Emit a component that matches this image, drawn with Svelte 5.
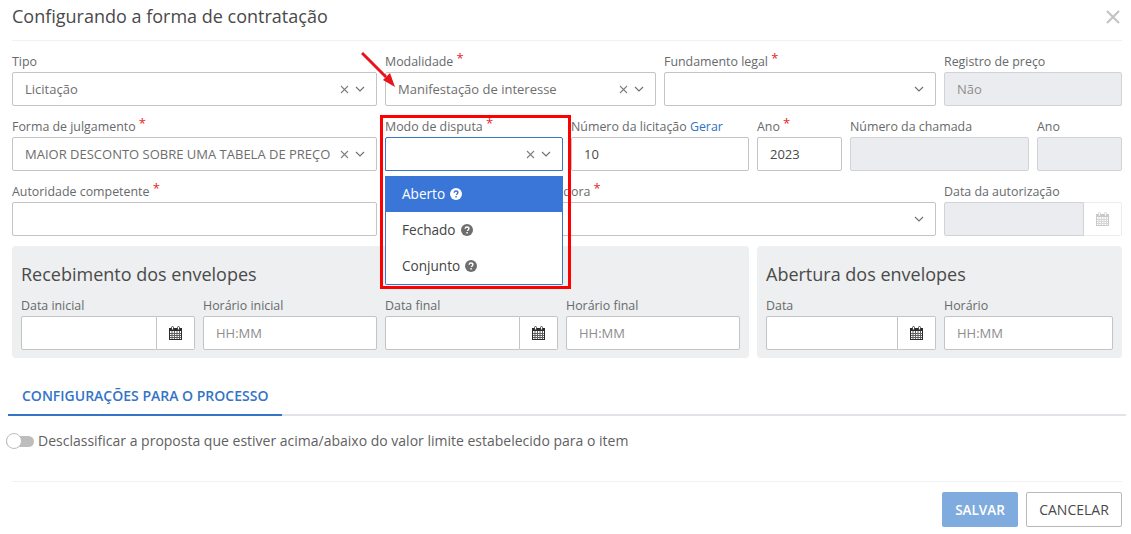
{#snippet chev()}
  <svg class="chev" width="10" height="6" viewBox="0 0 10 6"><path d="M1 1l4 4 4-4" fill="none" stroke="#6f6f6f" stroke-width="1.1"/></svg>
{/snippet}
{#snippet clear()}
  <svg class="clr" width="9" height="9" viewBox="0 0 9 9"><path d="M1 1l7 7M8 1L1 8" fill="none" stroke="#808080" stroke-width="1.1"/></svg>
{/snippet}
{#snippet cal(color)}
  <svg width="13" height="14" viewBox="0 0 13 14">
    <rect x="0.5" y="2.5" width="12" height="11" fill="none" stroke={color}/>
    <rect x="0" y="2" width="13" height="3" fill={color}/>
    <path d="M0 7.5h13M0 9.5h13M0 11.5h13M3 5v9M5.5 5v9M8 5v9M10.5 5v9" stroke={color} stroke-width="1" opacity=".75"/>
    <rect x="2.5" y="0.5" width="2" height="3.5" rx="1" fill="#fff" stroke={color} stroke-width="0.8"/>
    <rect x="8.5" y="0.5" width="2" height="3.5" rx="1" fill="#fff" stroke={color} stroke-width="0.8"/>
  </svg>
{/snippet}
{#snippet help(bg, fg)}
  <svg class="help" width="12" height="12" viewBox="0 0 12 12">
    <circle cx="6" cy="6" r="6" fill={bg}/>
    <path d="M4.1 4.7C4.2 3.6 5 3 6 3s1.900.6 1.900 1.600c0 1.300-1.400 1.300-1.400 2.400" fill="none" stroke={fg} stroke-width="1.4"/>
    <rect x="5.3" y="8" width="1.5" height="1.5" fill={fg}/>
  </svg>
{/snippet}

<div class="modal">
  <header class="head">
    <h1>Configurando a forma de contratação</h1>
    <svg class="close" width="14" height="14" viewBox="0 0 14 14"><path d="M1 1l12 12M13 1L1 13" stroke="#c4c4c4" stroke-width="2.2" fill="none"/></svg>
  </header>

  <div class="row r1">
    <div class="f"><span class="lb">Tipo</span>
      <div class="in"><span class="v">Licitação</span>{@render clear()}{@render chev()}</div></div>
    <div class="f"><span class="lb">Modalidade <i>*</i></span>
      <div class="in"><span class="v">Manifestação de interesse</span>{@render clear()}{@render chev()}</div></div>
    <div class="f"><span class="lb">Fundamento legal <i>*</i></span>
      <div class="in"><span class="v"></span>{@render chev()}</div></div>
    <div class="f"><span class="lb">Registro de preço</span>
      <div class="in dis"><span class="v">Não</span></div></div>
  </div>

  <div class="row r2">
    <div class="f"><span class="lb">Forma de julgamento <i>*</i></span>
      <div class="in"><span class="v nowrap">MAIOR DESCONTO SOBRE UMA TABELA DE PREÇO</span>{@render clear()}{@render chev()}</div></div>
    <div class="f"><span class="lb">Modo de disputa <i>*</i></span>
      <div class="in focus"><span class="v"></span>{@render clear()}{@render chev()}</div></div>
    <div class="f"><span class="lb">Número da licitação <a href="#gerar">Gerar</a></span>
      <div class="in"><span class="v dark">10</span></div></div>
    <div class="f"><span class="lb">Ano <i>*</i></span>
      <div class="in"><span class="v dark">2023</span></div></div>
    <div class="f"><span class="lb">Número da chamada</span><div class="in dis"></div></div>
    <div class="f"><span class="lb">Ano</span><div class="in dis"></div></div>
  </div>

  <div class="row r3">
    <div class="f"><span class="lb">Autoridade competente <i>*</i></span><div class="in"></div></div>
    <div class="f"><span class="lb lb-right">Autoridade contratadora <i>*</i></span>
      <div class="in"><span class="v"></span>{@render chev()}</div></div>
    <div class="f"><span class="lb">Data da autorização</span>
      <div class="group"><div class="in dis grow"></div><div class="addon off">{@render cal('#c9c9c9')}</div></div></div>
  </div>

  <div class="panels">
    <section class="panel p1">
      <h2>Recebimento dos envelopes</h2>
      <div class="pf">
        <div class="f"><span class="lb">Data inicial</span>
          <div class="group"><div class="in grow"></div><div class="addon">{@render cal('#2b2b2b')}</div></div></div>
        <div class="f"><span class="lb">Horário inicial</span><div class="in"><span class="v ph">HH:MM</span></div></div>
        <div class="f"><span class="lb">Data final</span>
          <div class="group"><div class="in grow"></div><div class="addon">{@render cal('#2b2b2b')}</div></div></div>
        <div class="f"><span class="lb">Horário final</span><div class="in"><span class="v ph">HH:MM</span></div></div>
      </div>
    </section>
    <section class="panel p2">
      <h2>Abertura dos envelopes</h2>
      <div class="pf">
        <div class="f"><span class="lb">Data</span>
          <div class="group"><div class="in grow"></div><div class="addon">{@render cal('#2b2b2b')}</div></div></div>
        <div class="f"><span class="lb">Horário</span><div class="in"><span class="v ph">HH:MM</span></div></div>
      </div>
    </section>
  </div>

  <nav class="tabs"><span class="tab">CONFIGURAÇÕES PARA O PROCESSO</span></nav>

  <div class="toggle-row">
    <span class="toggle"><span class="knob"></span></span>
    <span class="tt">Desclassificar a proposta que estiver acima/abaixo do valor limite estabelecido para o item</span>
  </div>

  <footer class="foot">
    <button class="save">SALVAR</button>
    <button class="cancel">CANCELAR</button>
  </footer>

  <ul class="menu">
    <li class="on">Aberto{@render help('#fff', '#3a76d8')}</li>
    <li>Fechado{@render help('#6e6e6e', '#fff')}</li>
    <li>Conjunto{@render help('#6e6e6e', '#fff')}</li>
  </ul>
  <div class="mark"></div>
  <svg class="arrow" width="40" height="40" viewBox="0 0 40 40">
    <path d="M1 1L25 25" stroke="#e8141c" stroke-width="3" fill="none"/>
    <path d="M34 35L22 28L29 21z" fill="#e8141c"/>
  </svg>
</div>

<style>
  :global(body) { margin: 0; background: #fff; }
  .modal {
    position: relative; width: 1131px; height: 534px; overflow: hidden; box-sizing: border-box;
    padding: 0 9px 0 12px; background: #fff; color: #676a6c;
    font: 12px/16px "Open Sans", sans-serif;
  }
  .head {
    height: 40px; display: flex; align-items: center; justify-content: space-between;
    border-bottom: 1px solid #f1f1f3; padding-right: 2px; margin-bottom: 12px;
    box-sizing: content-box;
  }
  h1 { margin: -9px 0 0; font-size: 18px; line-height: 24px; font-weight: 400; color: #4a4a4a; }
  .close { margin-top: -6px; }
  .row { display: grid; gap: 8px; }
  .r1 { grid-template-columns: 365px 271px 272px 178px; height: 53px; margin-bottom: 12px; }
  .r2 { grid-template-columns: 365px 178px 178px 85px 179px 85px; height: 53px; margin-bottom: 12px; }
  .r3 { grid-template-columns: 365px 551px 178px; height: 53px; margin-bottom: 10px; }
  .f { display: flex; flex-direction: column; min-width: 0; }
  .lb { height: 19px; line-height: 17px; white-space: nowrap; color: #676a6c; font-size: 12.400px; }
  .lb i { font-style: normal; color: #e5252a; font-size: 13px; position: relative; top: -3px; line-height: 10px; }
  .lb a { color: #3172c4; text-decoration: none; }
  .lb-right { padding-left: 62px; }
  .in {
    height: 34px; box-sizing: border-box; border: 1px solid #c4c4c4; border-radius: 2px; background: #fff;
    display: flex; align-items: center; padding: 0 12px; font-size: 13px; gap: 6px;
  }
  .v { flex: 1; min-width: 0; color: #6e6e6e; white-space: nowrap; overflow: hidden; }
  .nowrap { overflow: visible; }
  .dark { color: #4a4a4a; }
  .ph { color: #8d8d8d; }
  .dis { background: #ebecef; border-color: #d2d3d6; }
  .dis .v { color: #8e8e8e; }
  .focus { border-color: #3a76c4; border-radius: 2px 2px 0 0; }
  .clr { flex: none; margin-left: 2px; }
  .chev { flex: none; margin-right: -1px; }
  .group { display: flex; height: 34px; }
  .grow { flex: 1; min-width: 0; border-radius: 2px 0 0 2px; }
  .addon {
    width: 38px; flex: none; box-sizing: border-box; height: 34px; background: #fff;
    border: 1px solid #c4c4c4; border-left: 0; border-radius: 0 2px 2px 0;
    display: flex; align-items: center; justify-content: center;
  }
  .addon.off { border-color: #ececec; }
  .panels { display: flex; gap: 8px; }
  .panel {
    height: 112px; box-sizing: border-box; background: #edeff0; border-radius: 4px; padding: 15px 9px 8px;
  }
  .p1 { width: 737px; }
  .p2 { width: 365px; }
  h2 { margin: 0 0 10px; font-size: 18px; line-height: 27px; font-weight: 400; color: #4a4a4a; }
  .pf { display: grid; gap: 8px; }
  .p1 .pf { grid-template-columns: 174px 174px 173px 174px; }
  .p2 .pf { grid-template-columns: 170px 169px; }
  .pf .lb { height: 18px; line-height: 15px; }
  .tabs { margin: 27px 0 0 -4px; width: 1118px; height: 29px; border-bottom: 2px solid #e2e2e8; display: flex; }
  .tab {
    display: block; height: 29px; padding: 0 14px; margin-bottom: -2px;
    border-bottom: 2px solid #3474c6; color: #3474c6; font-size: 14px; font-weight: 600; line-height: 22px;
  }
  .toggle-row { display: flex; align-items: center; margin: 15px 0 0 -6px; height: 20px; }
  .toggle { width: 28px; height: 11px; border-radius: 6px; background: #bdbdbd; position: relative; flex: none; margin-right: 4px; }
  .knob {
    position: absolute; left: 0; top: -2.500px; width: 16px; height: 16px; box-sizing: border-box;
    border-radius: 50%; background: #fff; border: 1px solid #bdbdbd;
  }
  .tt { font-size: 14px; color: #5f6163; white-space: nowrap; }
  .foot {
    margin: 30px 0 0; width: 1110px; height: 46px; border-top: 1px solid #f1f1f3; box-sizing: border-box;
    display: flex; justify-content: flex-end; gap: 8px; padding-top: 10px;
  }
  button {
    height: 35px; font: 14px "Open Sans", sans-serif; border-radius: 2px; padding: 0; box-sizing: border-box;
  }
  .save { width: 76px; background: #7fabde; border: 0; color: #fff; font-size: 13.500px; font-weight: 600; }
  .cancel { width: 96px; background: #fff; border: 1px solid #b9b9b9; color: #4a4a4a; }
  .menu {
    position: absolute; left: 385px; top: 176px; width: 178px; height: 109px; box-sizing: border-box;
    margin: 0; padding: 0; list-style: none; background: #fff; border: 1px solid #3a76c4; border-top: 0;
    border-radius: 0 0 2px 2px; font-size: 13.600px; color: #444;
  }
  .menu li { height: 36px; display: flex; align-items: center; padding-left: 16px; gap: 5px; }
  .menu .on { background: #3a76d8; color: #fff; margin: 0 -1px; padding-left: 17px; }
  .mark {
    position: absolute; left: 380px; top: 115px; width: 191px; height: 174px; box-sizing: border-box;
    border: 3px solid #f00; pointer-events: none;
  }
  .arrow { position: absolute; left: 361px; top: 52px; pointer-events: none; }
</style>
